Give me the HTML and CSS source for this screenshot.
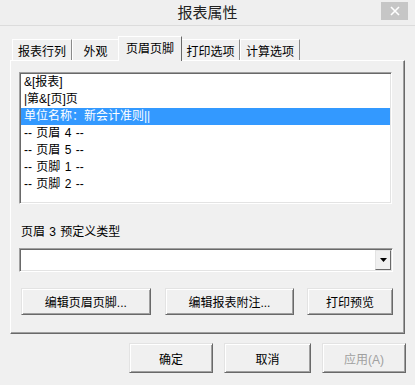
FILE: index.html
```html
<!DOCTYPE html>
<html lang="zh-CN">
<head>
    <meta charset="UTF-8">
    <title>报表属性</title>
    <link rel="stylesheet" href="styles.css">
</head>
<body>
    <div class="dialog">
        <div class="titlebar">
            <span></span>
            <div class="title">报表属性</div>
            <div class="close">
                <svg width="10" height="10" viewBox="0 0 10 10">
                    <path d="M1 1 L9 9 M9 1 L1 9" stroke="#fff" stroke-width="1.6"></path>
                </svg>
            </div>
        </div>

        <div class="tabs">
            <div class="tab t1">报表行列</div>
            <div class="tab t2">外观</div>
            <div class="tab active">页眉页脚</div>
            <div class="tab t4">打印选项</div>
            <div class="tab t5">计算选项</div>
        </div>

        <div class="panel">
            <div class="listbox">
                <div class="item">&amp;[报表]</div>
                <div class="item">|第&amp;[页]页</div>
                <div class="item selected">单位名称：新会计准则||</div>
                <div class="item">-- 页眉 4 --</div>
                <div class="item">-- 页眉 5 --</div>
                <div class="item">-- 页脚 1 --</div>
                <div class="item">-- 页脚 2 --</div>
            </div>

            <div class="field-label">页眉 3 预定义类型</div>

            <div class="combo">
                <div class="combo-value"></div>
                <div class="combo-btn">
                    <svg width="7" height="4" viewBox="0 0 7 4">
                        <path d="M0 0 L7 0 L3.5 4 Z" fill="#000"></path>
                    </svg>
                </div>
            </div>

            <div class="actions">
                <button class="btn wide">编辑页眉页脚...</button>
                <button class="btn wide">编辑报表附注...</button>
                <button class="btn narrow">打印预览</button>
            </div>
        </div>

        <div class="footer">
            <button class="btn ok">确定</button>
            <button class="btn cancel">取消</button>
            <button class="btn apply" disabled>应用(A)</button>
        </div>
    </div>
</body>
</html>
```

FILE: styles.css
```css
* {
    margin: 0;
    padding: 0;
    box-sizing: border-box;
}

body {
    width: 415px;
    height: 385px;
    background: #f0f0f0;
    font-family: "Liberation Sans", "Noto Sans CJK SC", sans-serif;
    font-size: 12px;
    color: #000;
    overflow: hidden;
}

.titlebar {
    height: 26px;
    display: grid;
    grid-template-columns: 1fr auto 1fr;
    align-items: center;
    border-bottom: 1px solid #dcdcdc;
    background: #efefef;
}

.title {
    font-size: 15px;
    color: #222;
    line-height: 24px;
}

.close {
    justify-self: end;
    align-self: start;
    width: 27px;
    height: 18px;
    margin-top: 2px;
    margin-right: 7px;
    background: #c6c6c6;
    display: flex;
    justify-content: center;
    align-items: center;
}

/* tab strip */
.tabs {
    display: flex;
    align-items: flex-end;
    height: 24px;
    margin-top: 10px;
    padding-left: 12px;
}

.tab {
    height: 21px;
    display: flex;
    justify-content: center;
    align-items: center;
    padding-top: 1px;
    border-top: 1px solid #fff;
    border-left: 1px solid #fff;
    border-right: 1px solid #8a8a8a;
    white-space: nowrap;
}

.t1 { width: 60px; }
.t2 { width: 46px; border-right: none; }
.t4 { width: 58px; border-left: none; }
.t5 { width: 60px; }

.tab.active {
    width: 64px;
    height: 25px;
    margin-bottom: -1px;
    padding-top: 0;
    padding-bottom: 4px;
    background: #f0f0f0;
    position: relative;
    z-index: 1;
    border-right: 1px solid #696969;
}

.panel {
    width: 395px;
    height: 274px;
    margin-left: 10px;
    padding: 11px 11px 0 8px;
    border: 1px solid;
    border-color: #fff #696969 #696969 #fff;
    box-shadow: inset -1px -1px 0 #a0a0a0;
}

/* sunken boxes */
.listbox,
.combo {
    background: #fff;
    border: 1px solid;
    border-color: #a0a0a0 #fff #fff #a0a0a0;
    box-shadow: inset 1px 1px 0 #696969, inset -1px -1px 0 #e3e3e3;
    padding: 1px;
}

.listbox {
    width: 373px;
    height: 132px;
}

.item {
    height: 17px;
    line-height: 17px;
    padding-left: 3px;
    white-space: pre;
    word-spacing: 1px;
}

.item.selected {
    background: #3399ff;
    color: #fff;
}

.field-label {
    margin-top: 20px;
    line-height: 16px;
    padding-left: 2px;
    word-spacing: 1px;
}

.combo {
    width: 374px;
    height: 24px;
    margin-top: 8px;
    display: flex;
}

.combo-value {
    flex: 1;
}

.combo-btn {
    width: 16px;
    background: #f0f0f0;
    border: 1px solid;
    border-color: #e3e3e3 #696969 #696969 #e3e3e3;
    display: flex;
    justify-content: center;
    align-items: center;
}

/* buttons */
.btn {
    height: 27px;
    font-family: inherit;
    font-size: 12px;
    color: #000;
    background: #f0f0f0;
    border: 1px solid;
    border-color: #e3e3e3 #696969 #696969 #e3e3e3;
    box-shadow: inset 1px 1px 0 #fff, inset -1px -1px 0 #a0a0a0;
}

.btn:disabled {
    color: #a0a0a0;
}

.actions {
    display: flex;
    margin-top: 16px;
    padding-left: 2px;
}

.btn.wide {
    width: 130px;
    margin-right: 14px;
}

.btn.wide + .btn.wide {
    margin-right: 13px;
}

.btn.narrow {
    width: 86px;
}

.footer {
    display: flex;
    justify-content: flex-end;
    gap: 11px;
    margin-top: 9px;
    padding-right: 9px;
}

.footer .btn {
    height: 30px;
    width: 84px;
}

.footer .cancel {
    width: 87px;
}
```
